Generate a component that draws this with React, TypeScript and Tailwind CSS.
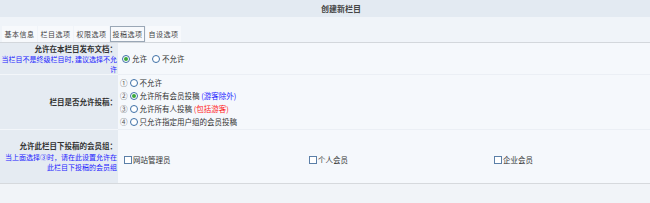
import React from "react";

const font = { fontFamily: '"Noto Sans CJK SC", "Noto Sans", sans-serif' };

function Radio({ checked }: { checked?: boolean }) {
  return (
    <span className="inline-flex items-center justify-center w-[8px] h-[8px] rounded-full border border-[#3c6fa6] bg-white shrink-0">
      {checked && <span className="w-[4px] h-[4px] rounded-full bg-[#3aa83a]" />}
    </span>
  );
}

function Check() {
  return <span className="inline-block w-[8px] h-[8px] border border-[#5b7fa8] bg-white shrink-0" />;
}

const tabs = ["基本信息", "栏目选项", "权限选项", "投稿选项", "自设选项"];

export default function App() {
  return (
    <div className="w-[650px] h-[203px] bg-[#f1f4f8] text-[#333] overflow-hidden" style={font}>
      <div className="h-[17px] bg-[#e3eaf2] flex items-center justify-center pl-[32px]">
        <span className="text-[8px] font-bold text-[#444]">创建新栏目</span>
      </div>
      <div className="h-[9px] bg-[#f0f4f9]" />
      <div className="h-[17px] bg-[#f0f4f9] flex items-end gap-[1px] px-[2px] border-b border-[#d3d7dc]">
        {tabs.map((t, i) => (
          <div
            key={t}
            className={
              "w-[35px] h-[16px] flex items-center justify-center text-[7px] tracking-[0.5px] text-[#444] bg-[#f7f9fc] " +
              (i === 3 ? "border border-[#9aa7b6] bg-[#eef2f7]" : "")
            }
          >
            {t}
          </div>
        ))}
      </div>

      <div className="grid grid-cols-[118px_1fr] bg-[#f5f8fc] border-b border-[#d6d9dd]">
        {/* row 1 */}
        <div className="h-[32px] bg-[#e5ebf2] flex flex-col justify-center items-end text-right pr-[1px] border-b border-[#f3f6fa]">
          <div className="text-[7.5px] font-bold leading-[10px] text-[#333]">允许在本栏目发布文档：</div>
          <div className="text-[7px] leading-[10px] text-[#2424ff] whitespace-nowrap">
            当栏目不是终级栏目时, 建议选择不允
            <br />许
          </div>
        </div>
        <div className="h-[32px] flex items-center gap-[2px] pl-[4px] text-[7.5px] border-b border-[#ebeff5]">
          <Radio checked />
          <span className="mr-[3px]">允许</span>
          <Radio />
          <span>不允许</span>
        </div>

        {/* row 2 */}
        <div className="h-[55px] bg-[#e5ebf2] flex items-center justify-end pr-[1px] border-b border-[#f3f6fa]">
          <span className="text-[7.5px] font-bold text-[#333]">栏目是否允许投稿：</span>
        </div>
        <div className="h-[55px] flex flex-col justify-center gap-[3px] pl-[2px] text-[7.5px] leading-[10px] border-b border-[#ebeff5]">
          <div className="flex items-center gap-[2px]">
            <span className="text-[#555]">①</span>
            <Radio />
            <span>不允许</span>
          </div>
          <div className="flex items-center gap-[2px]">
            <span className="text-[#555]">②</span>
            <Radio checked />
            <span>
              允许所有会员投稿 <span className="text-[#2424ff]">(游客除外)</span>
            </span>
          </div>
          <div className="flex items-center gap-[2px]">
            <span className="text-[#555]">③</span>
            <Radio />
            <span>
              允许所有人投稿 <span className="text-[#ff1a1a]">(包括游客)</span>
            </span>
          </div>
          <div className="flex items-center gap-[2px]">
            <span className="text-[#555]">④</span>
            <Radio />
            <span>只允许指定用户组的会员投稿</span>
          </div>
        </div>

        {/* row 3 */}
        <div className="h-[53px] bg-[#e5ebf2] flex flex-col justify-center items-end text-right pr-[1px]">
          <div className="text-[7.5px] font-bold leading-[10px] text-[#333] mb-[1px]">允许此栏目下投稿的会员组：</div>
          <div className="text-[7px] leading-[10px] text-[#2424ff] whitespace-nowrap">
            当上面选择③时，请在此设置允许在
            <br />
            此栏目下投稿的会员组
          </div>
        </div>
        <div className="h-[53px] grid grid-cols-[185px_185px_1fr] items-center pl-[6px] pt-[6px] text-[7.5px]">
          <label className="flex items-center gap-[1px]">
            <Check />
            <span>网站管理员</span>
          </label>
          <label className="flex items-center gap-[1px]">
            <Check />
            <span>个人会员</span>
          </label>
          <label className="flex items-center gap-[1px]">
            <Check />
            <span>企业会员</span>
          </label>
        </div>
      </div>
    </div>
  );
}
